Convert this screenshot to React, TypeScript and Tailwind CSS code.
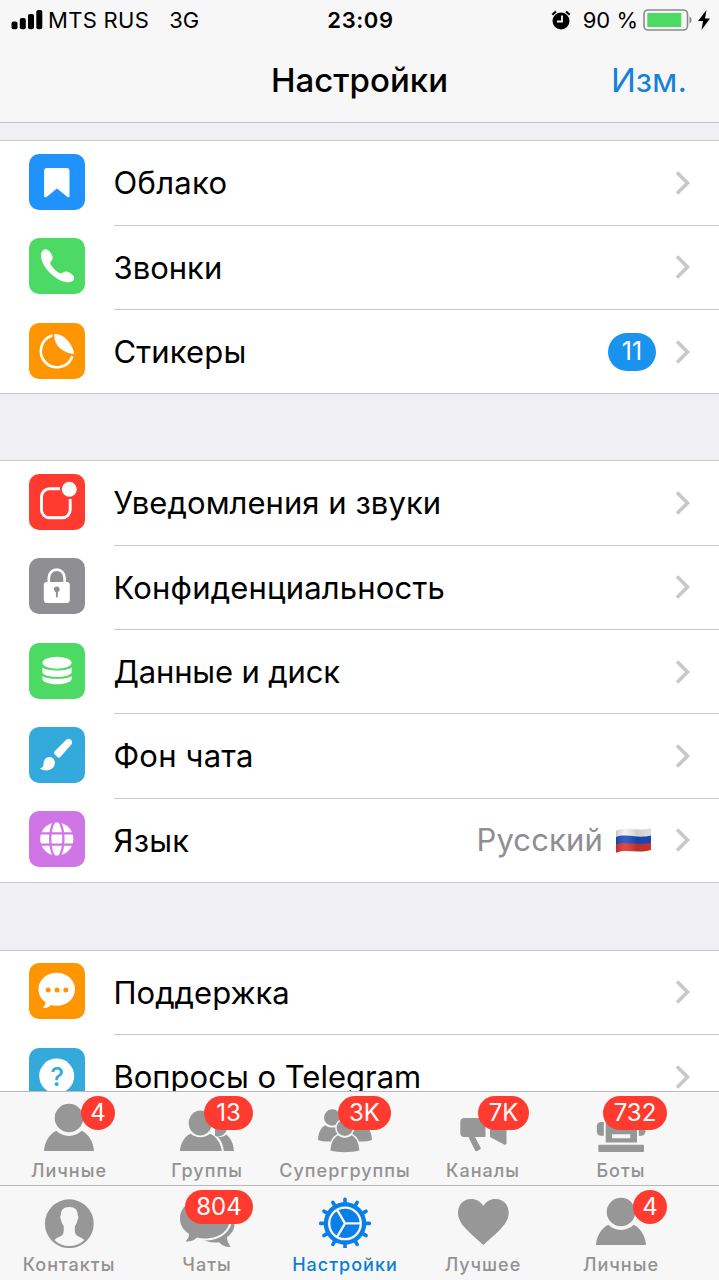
import type { ReactNode } from "react";
import clsx from "clsx";

type RowItem = {
  label: string;
  color: string;
  tracking?: string;
  icon: ReactNode;
  right?: ReactNode;
};

type TabItem = {
  label: string;
  icon: ReactNode;
  badge?: string;
  badgeWidth?: string;
  active?: boolean;
};

/* Row icons, drawn on the 56px tile */

const BookmarkIcon = () => (
  <path d="M18 14h19.500a3 3 0 0 1 3 3v25c0 1.400-1.200 1.600-2 .9L27.900 34.500 17.600 42.900c-1 .7-2.500.5-2.500-.9V17a3 3 0 0 1 2.900-3Z" fill="#fff" />
);

const PhoneIcon = () => (
  <path
    d="M12 16.500c.3-3.300 2.500-5.500 5-5.300 2.800.3 6.600 5.300 6.700 8.600.1 2.400-2.300 3.300-2.500 5.200-.2 2.500 7.800 10.700 10.600 10.500 1.800-.1 3-2.200 5.400-1.900 3.300.5 7.900 3.600 7.900 6.300 0 2.600-2.800 4.300-6 4.400C27.800 44.500 11.200 28.500 12 16.500Z"
    fill="#fff"
  />
);

const StickerIcon = () => (
  <>
    <path d="M22.500 12.800A16.200 16.200 0 1 0 43 34.200" fill="none" stroke="#fff" strokeWidth="2.600" strokeLinecap="round" />
    <path d="M25.200 11.400c1.600-.9 4.800-.2 8 1.700 5.500 3.300 9.300 8.200 11.800 16.200.3 1.400-.6 1.900-2.200 1.500C33.500 28.600 25 23 25.200 11.400Z" fill="#fff" />
  </>
);

const NotificationIcon = () => (
  <>
    <path d="M31 14.800H20.500a8 8 0 0 0-8 8v13a8 8 0 0 0 8 8h12.700a8 8 0 0 0 8-8V25" fill="none" stroke="#fff" strokeWidth="2.900" />
    <circle cx="40.300" cy="15.300" r="7.500" fill="#fff" />
  </>
);

const LockIcon = () => (
  <>
    <path d="M19.800 26v-6c0-4.600 3.200-8.300 7.900-8.300s7.900 3.700 7.900 8.300v6" fill="none" stroke="#fff" strokeWidth="2.700" />
    <rect x="14.800" y="24" width="26" height="21" rx="3" fill="#fff" />
    <circle cx="27.800" cy="31.300" r="2.800" fill="#8e8e93" />
    <rect x="26.900" y="31.500" width="1.900" height="8" rx=".9" fill="#8e8e93" />
  </>
);

const DiskIcon = () => (
  <>
    <ellipse cx="28" cy="19.800" rx="14.600" ry="6" fill="#fff" />
    <path d="M13.400 24.200c4 4.300 25.200 4.300 29.200 0v5.300c-2 6-27.200 6-29.200 0Z" fill="#fff" />
    <path d="M13.400 32.800c4 4.200 25.200 4.200 29.200 0v3.500c-2 6.600-27.200 6.600-29.200 0Z" fill="#fff" />
  </>
);

const BrushIcon = () => (
  <>
    <path
      d="M37.200 12.800c1.500-1.300 3.600-1.200 4.900.1 1.300 1.400 1.300 3.400 0 4.900L31.300 29.900c-.9 1-1.900 1-2.800.2l-2.900-2.900c-.9-.9-.8-2 .1-2.900Z"
      fill="#fff"
    />
    <path d="M16.800 31.300c3.300-2.600 8.200-1 9 3.200.9 5-3.300 8.900-8.300 8.900-2.700 0-4.900-.7-6.500-2.200 2.600-.4 3.300-1.600 3.500-4.300.2-2.500.8-4.200 2.300-5.600Z" fill="#fff" />
  </>
);

const GlobeIcon = () => (
  <>
    <circle cx="27.800" cy="28" r="16.600" fill="#fff" />
    <g fill="none" stroke="#cf75e6" strokeWidth="2.300">
      <path d="M10 22.300h36M10 33.700h36" />
      <path d="M25.300 10.500C19.800 19 19.800 37 25.300 45.500M30.300 10.500c5.500 8.500 5.500 26.500 0 35" />
    </g>
  </>
);

const SupportIcon = () => (
  <>
    <path
      d="M27.700 9.700c10.300 0 18.300 7.100 18.300 16.500s-8 16.600-18.300 16.600c-1.900 0-3.800-.2-5.500-.7-2 1.900-4.300 3-7.200 3-.8 0-.9-.8-.4-1.300 1.400-1.400 2-2.800 2-4.500-4.300-3-7.100-7.700-7.100-13.100 0-9.400 8-16.500 18.200-16.500Z"
      fill="#fff"
    />
    <circle cx="19.200" cy="27" r="2.500" fill="#ff9500" />
    <circle cx="28" cy="27" r="2.500" fill="#ff9500" />
    <circle cx="36.800" cy="27" r="2.500" fill="#ff9500" />
  </>
);

const FaqIcon = () => (
  <>
    <circle cx="27.700" cy="28" r="17.500" fill="#fff" />
    <text x="28" y="37.500" textAnchor="middle" fontSize="26" fontWeight="500" fill="#34aadc">
      ?
    </text>
  </>
);

/* Tab icons, 60x56 */

const PersonIcon = () => (
  <>
    <circle cx="30" cy="20" r="14.300" />
    <path d="M5 53c.6-8.500 5-16.700 12.200-20.200a18.500 18.500 0 0 0 25.600 0C50 36.300 54.400 44.500 55 53Z" />
  </>
);

const GroupIcon = () => (
  <>
    <path d="M38 18a9.500 10.500 0 1 1 0 20Z" />
    <path d="M40.500 38.500c3 .9 6.500.3 8.800-2 4.600 3.400 7.200 9.500 7.700 16.500H46.800c-.5-5.700-2.600-11-6.300-14.500Z" />
    <ellipse cx="23.300" cy="25" rx="13.500" ry="14.500" fill="#f7f7f7" />
    <ellipse cx="23.300" cy="25" rx="11.600" ry="12.500" />
    <path
      d="M3 53c.5-7.500 4.300-14.500 10.500-17.300a15.500 15.500 0 0 0 19.600 0C39.600 38.500 44 45.500 44.800 53Z"
      stroke="#f7f7f7"
      strokeWidth="2"
      paintOrder="stroke"
    />
  </>
);

const SupergroupIcon = () => (
  <>
    <circle cx="17.300" cy="19.500" r="8.300" />
    <circle cx="42.700" cy="19.500" r="8.300" />
    <path d="M3 42c.2-6.500 2.300-12 7-14.800 4.500 3.200 10 3.200 14.500 0l2 16.300H12C9 43.500 6 43 3 42Z" />
    <path d="M57 42c-.2-6.500-2.300-12-7-14.800-4.500 3.200-10 3.200-14.500 0l-2 16.300H48c3 0 6-.5 9-1.500Z" />
    <path
      d="M15.500 52.500c.3-6.700 2.500-12.500 7.500-15.300 4.300 3.200 9.500 3.200 13.800 0 5 2.800 7.200 8.600 7.500 15.300-8.600 2.300-20.200 2.300-28.800 0Z"
      stroke="#f7f7f7"
      strokeWidth="3"
      paintOrder="stroke"
    />
    <circle cx="29.800" cy="29.800" r="8.200" stroke="#f7f7f7" strokeWidth="3" paintOrder="stroke" />
  </>
);

const ChannelIcon = () => (
  <>
    <path d="M11 20h21.500v19H22l5.700 10.800c.3.700.1 1.200-.4 1.500l-3.500 1.900c-.7.3-1.300.1-1.700-.6L15.400 39H11a3.500 3.500 0 0 1-3.700-3.500v-12A3.500 3.500 0 0 1 11 20Z" />
    <path d="M37 20 51 12.500c1.500-.7 2.500 0 2.500 1.500v31c0 1.500-1 2.200-2.500 1.400L37 39Z" />
  </>
);

const BotIcon = () => (
  <>
    <rect x="7.300" y="46.700" width="45.700" height="7.300" rx="1" />
    <path fillRule="evenodd" d="M14.700 14H46v30.500H14.700ZM21 36.200v4h18.200v-4Z" />
    <path d="M12.800 24v13.800H10A4.200 4.200 0 0 1 5.800 33.600v-5.400A4.200 4.200 0 0 1 10 24ZM47.800 24v13.800h2.400a4.200 4.200 0 0 0 4.200-4.200v-5.400a4.200 4.200 0 0 0-4.200-4.200Z" />
  </>
);

const ContactIcon = () => (
  <>
    <circle cx="30.300" cy="31.700" r="24.400" />
    <path
      d="M30.300 15c5.700 0 8.700 3.200 8.500 8.600.8.500.7 3-.3 4.500-.4 2.900-1.500 4.300-2.600 5.800-.3 3.800-.2 6.900 1 8.700 1.500 2.300 5.600 2.500 8.300 5.400-4 4-9.300 6-14.900 6s-10.900-2-14.900-6c2.700-2.900 6.800-3.100 8.300-5.400 1.200-1.800 1.300-4.900 1-8.700-1.100-1.500-2.200-2.900-2.600-5.800-1-1.500-1.100-4-.3-4.500-.2-5.400 2.800-8.600 8.500-8.600Z"
      fill="#f7f7f7"
    />
  </>
);

const ChatsIcon = () => (
  <>
    <path d="M36 16c13 0 21.500 7 21.500 16 0 5.500-3 10-7.500 13.200.2 3.500 1.200 6.300 3.200 8.700.3.700 0 1-.8 1-4.500 0-7.400-1.300-10.200-4.700-6.500.8-13.500-.5-18.200-3.700Z" />
    <path
      d="M28 6.500c14 0 25 8.300 25 20s-10.500 20-25 20c-2.500 0-5.500-.3-8-1-2.800 2.800-6.500 4.300-10.500 4-.9-.1-.9-.8-.2-1.300 2.300-1.700 3-4 2.500-6.500C6 38 3 32.500 3 26.500c0-11.700 11-20 25-20Z"
      stroke="#f7f7f7"
      strokeWidth="4"
      paintOrder="stroke"
    />
  </>
);

const TEETH = Array.from({ length: 12 }, (_, i) => i * 30);

const GearIcon = () => (
  <>
    <circle cx="30" cy="31.400" r="21.300" />
    {TEETH.map((angle) => (
      <rect key={angle} x="28.200" y="5.400" width="3.600" height="8" rx="1.500" transform={`rotate(${angle} 30 31.400)`} />
    ))}
    <g fill="none" stroke="#f7f7f7" strokeWidth="2.300">
      <circle cx="30" cy="31.400" r="15.800" />
      <path d="M30 31.400h16M30 31.400l-8-13.800M30 31.400l-8 13.800" />
    </g>
  </>
);

const HeartIcon = () => (
  <path d="M30.300 53C26 48.800 19.500 43.800 13.500 37.500 8 31.700 5 26.500 5 20.500 5 12.800 10.700 7 18 7c5.300 0 9.700 2.500 12.300 7C33 9.500 37.300 7 42.600 7 50 7 55.700 12.800 55.700 20.500c0 6-3 11.200-8.500 17C41.200 43.800 34.500 48.800 30.300 53Z" />
);

const RussianFlag = () => (
  <svg width="37" height="27" viewBox="0 0 37 27" className="ml-3">
    <defs>
      <linearGradient id="flag-shade" x1="0" x2="1" y1="0" y2="0">
        <stop offset="0" stopColor="#000" stopOpacity=".18" />
        <stop offset=".25" stopColor="#fff" stopOpacity=".1" />
        <stop offset=".6" stopColor="#000" stopOpacity=".15" />
        <stop offset="1" stopColor="#000" stopOpacity=".08" />
      </linearGradient>
    </defs>
    <path d="M1 3.500C12-1 22 5 36 1v8.500C22 13.500 12 7.500 1 12Z" fill="#f1f1f1" />
    <path d="M1 10C12 6 22 12 36 8.500v8.500C22 21 12 15 1 19Z" fill="#1c4fc4" />
    <path d="M1 17.500C12 13.500 22 19.500 36 15.500V23C22 27 12 21.500 1 25.800Z" fill="#e0352f" />
    <path d="M1 3.500C12-1 22 5 36 1v22C22 27 12 21.500 1 25.800Z" fill="url(#flag-shade)" />
  </svg>
);

const SECTIONS: RowItem[][] = [
  [
    { label: "Облако", color: "bg-[#1f93fb]", tracking: "tracking-[0.3px]", icon: <BookmarkIcon /> },
    { label: "Звонки", color: "bg-[#4cd964]", icon: <PhoneIcon /> },
    {
      label: "Стикеры",
      color: "bg-[#ff9500]",
      tracking: "tracking-[0.15px]",
      icon: <StickerIcon />,
      right: (
        <span className="flex h-[38px] w-12 items-center justify-center rounded-full bg-[#1993ee] text-[25px] text-white">11</span>
      ),
    },
  ],
  [
    { label: "Уведомления и звуки", color: "bg-[#ff3b30]", tracking: "tracking-[0.05px]", icon: <NotificationIcon /> },
    { label: "Конфиденциальность", color: "bg-[#8e8e93]", tracking: "tracking-[0.18px]", icon: <LockIcon /> },
    { label: "Данные и диск", color: "bg-[#4cd964]", tracking: "tracking-[-0.15px]", icon: <DiskIcon /> },
    { label: "Фон чата", color: "bg-[#34aadc]", tracking: "tracking-[0.2px]", icon: <BrushIcon /> },
    {
      label: "Язык",
      color: "bg-[#cf75e6]",
      tracking: "tracking-[0.2px]",
      icon: <GlobeIcon />,
      right: (
        <span className="mr-1 flex items-center text-[31px] tracking-[0.15px] text-[#8e8e93]">
          Русский
          <RussianFlag />
        </span>
      ),
    },
  ],
  [
    { label: "Поддержка", color: "bg-[#ff9500]", icon: <SupportIcon /> },
    { label: "Вопросы о Telegram", color: "bg-[#34aadc]", icon: <FaqIcon /> },
  ],
];

const TAB_ROWS: TabItem[][] = [
  [
    { label: "Личные", icon: <PersonIcon />, badge: "4", badgeWidth: "w-[34px]" },
    { label: "Группы", icon: <GroupIcon />, badge: "13", badgeWidth: "w-[49px]" },
    { label: "Супергруппы", icon: <SupergroupIcon />, badge: "3K", badgeWidth: "w-[53px]" },
    { label: "Каналы", icon: <ChannelIcon />, badge: "7K", badgeWidth: "w-[51px]" },
    { label: "Боты", icon: <BotIcon />, badge: "732", badgeWidth: "w-[64px]" },
  ],
  [
    { label: "Контакты", icon: <ContactIcon /> },
    { label: "Чаты", icon: <ChatsIcon />, badge: "804", badgeWidth: "w-[68px]" },
    { label: "Настройки", icon: <GearIcon />, active: true },
    { label: "Лучшее", icon: <HeartIcon /> },
    { label: "Личные", icon: <PersonIcon />, badge: "4", badgeWidth: "w-[34px]" },
  ],
];

function StatusBar() {
  return (
    <div className="grid h-10 grid-cols-[1fr_auto_1fr] items-center text-[22px] leading-none">
      <div className="flex items-center pl-[11px]">
        <svg width="32" height="20" viewBox="0 0 32 20" className="mr-[5px]">
          <rect x=".5" y="11.500" width="6" height="7.700" rx="2" />
          <rect x="8.800" y="8" width="6" height="11.200" rx="2" />
          <rect x="17" y="4" width="6" height="15.200" rx="2" />
          <rect x="25.300" y="0" width="6" height="19.200" rx="2" />
        </svg>
        <span className="tracking-[0.3px]">MTS RUS</span>
        <span className="ml-5">3G</span>
      </div>
      <span className="pl-0.5 font-semibold tracking-[0.6px]">23:09</span>
      <div className="flex items-center justify-end pr-[9px]">
        <svg width="20" height="20" viewBox="0 0 20 20" className="mr-3">
          <circle cx="10" cy="11" r="8.500" />
          <path d="M1.300 4.800 5 1.500M18.700 4.800 15 1.500" stroke="#000" strokeWidth="2.200" />
          <path d="M11 5.500v6H6" fill="none" stroke="#f7f7f7" strokeWidth="1.800" />
        </svg>
        <span>90 %</span>
        <svg width="50" height="22" viewBox="0 0 50 22" className="ml-[5px]">
          <rect x="1" y="1" width="43.500" height="20" rx="4" fill="none" stroke="#8a8a8a" strokeWidth="1.600" />
          <rect x="4.300" y="4" width="34" height="14" rx="1" fill="#4cd964" />
          <path d="M46.500 7.500c2.800 1 2.800 6 0 7Z" fill="#8a8a8a" />
        </svg>
        <svg width="12" height="20" viewBox="0 0 12 20" className="ml-[5px]">
          <path d="M8.500 0 0 11h5L3.500 20 12 8.500H7Z" />
        </svg>
      </div>
    </div>
  );
}

function SettingsRow({ item, first }: { item: RowItem; first: boolean }) {
  return (
    <li className="flex h-[84.35px] shrink-0 pl-[29px]">
      <div className={clsx("flex w-[84.5px] shrink-0 items-center", first ? "-ml-[29px] box-content border-t border-[#c8c7cc] pb-[3px] pl-[29px]" : "pb-[1px]")}>
        <svg viewBox="0 0 56 56" className={clsx("size-14 rounded-[10px]", item.color)}>
          {item.icon}
        </svg>
      </div>
      <div className="flex flex-1 items-center border-t border-[#c8c7cc] pr-[27px]">
        <span className={clsx("flex-1 pt-[1px] whitespace-nowrap text-[31px]", item.tracking)}>{item.label}</span>
        {item.right}
        <svg width="18" height="26" viewBox="0 0 18 26" className="ml-[18px]">
          <path d="m3 2.500 10.500 10.500L3 23.500" fill="none" stroke="#c7c7cc" strokeWidth="3.600" />
        </svg>
      </div>
    </li>
  );
}

function Tab({ tab }: { tab: TabItem }) {
  return (
    <li
      className={clsx(
        "relative flex w-[138px] flex-col items-center pt-1.5",
        tab.active ? "fill-[#0b7fe5] text-[#0b7fd8]" : "fill-[#979797] text-[#929292]"
      )}
    >
      <svg width="60" height="56" viewBox="0 0 60 56">
        {tab.icon}
      </svg>
      <span
        className={clsx(
          "mt-[5px] whitespace-nowrap text-[18px] leading-6 tracking-[1px]",
          tab.active ? "font-medium" : "font-[450]"
        )}
      >
        {tab.label}
      </span>
      {tab.badge && (
        <span
          className={clsx(
            "absolute top-[4px] right-[23px] flex h-[34px] items-center justify-center rounded-full bg-[#ff3b30] text-[24px] text-white",
            tab.badgeWidth
          )}
        >
          {tab.badge}
        </span>
      )}
    </li>
  );
}

export default function App() {
  return (
    <div className="flex h-[1280px] w-[719px] flex-col overflow-hidden bg-[#efeff4] font-['Inter','Liberation_Sans',sans-serif] text-black">
      <header className="h-[123px] shrink-0 border-b border-[#c4c4c6] bg-[#f7f7f7]">
        <StatusBar />
        <div className="grid h-[82px] grid-cols-[1fr_auto_1fr] items-center">
          <h1 className="col-start-2 text-[33px] font-[450]">Настройки</h1>
          <button className="justify-self-end pr-8 text-[33px] text-[#1382da]">Изм.</button>
        </div>
      </header>

      <main className="flex h-[968px] shrink-0 flex-col gap-[67px] overflow-hidden pt-[17.4px]">
        {SECTIONS.map((rows, i) => (
          <ul key={i} className={clsx("shrink-0 bg-white", i < 2 ? "shadow-[0_1px_0_#c8c7cc]" : "mt-[0.6px]")}>
            {rows.map((item, j) => (
              <SettingsRow key={item.label} item={item} first={j === 0} />
            ))}
          </ul>
        ))}
      </main>

      <nav className="shrink-0 bg-[#f7f7f7]">
        {TAB_ROWS.map((tabs, i) => (
          <ul key={i} className={clsx("flex border-t border-[#b9b9bb]", i === 0 ? "h-[94px]" : "h-[95px]")}>
            {tabs.map((tab, j) => (
              <Tab key={j} tab={tab} />
            ))}
          </ul>
        ))}
      </nav>
    </div>
  );
}
